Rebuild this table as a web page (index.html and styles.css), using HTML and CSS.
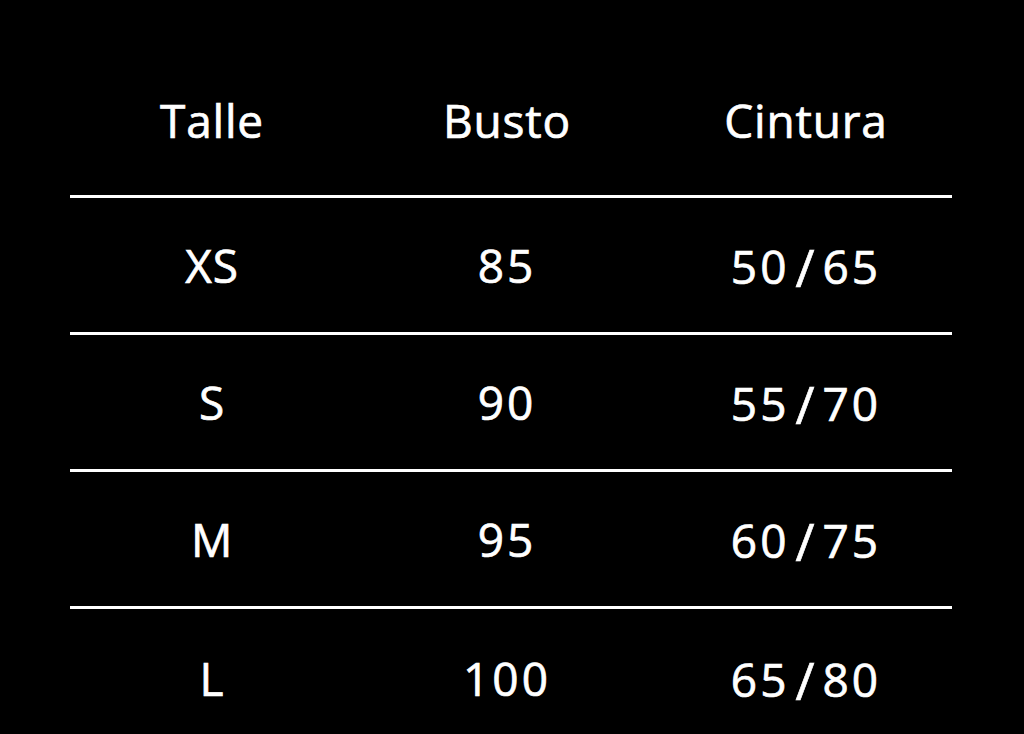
FILE: index.html
```html
<!DOCTYPE html>
<html lang="es">
<head>
<meta charset="utf-8">
<title>Tabla de talles</title>
<link rel="stylesheet" href="styles.css">
</head>
<body>
<div class="table">
  <div class="row head">
    <div class="cell c1">Talle</div>
    <div class="cell c2">Busto</div>
    <div class="cell c3">Cintura</div>
  </div>
  <div class="row">
    <div class="cell c1">XS</div>
    <div class="cell c2 num">85</div>
    <div class="cell c3 num">50<span class="sl">/</span>65</div>
  </div>
  <div class="row">
    <div class="cell c1">S</div>
    <div class="cell c2 num">90</div>
    <div class="cell c3 num">55<span class="sl">/</span>70</div>
  </div>
  <div class="row">
    <div class="cell c1">M</div>
    <div class="cell c2 num">95</div>
    <div class="cell c3 num">60<span class="sl">/</span>75</div>
  </div>
  <div class="row last">
    <div class="cell c1">L</div>
    <div class="cell c2 num">100</div>
    <div class="cell c3 num">65<span class="sl">/</span>80</div>
  </div>
</div>
</body>
</html>
```
FILE: styles.css
```css
html, body {
  margin: 0;
  padding: 0;
  background: #000;
  height: 734px;
  overflow: hidden;
}
body {
  color: #fff;
  font-family: "Open Sans", "DejaVu Sans", sans-serif;
  font-weight: 500;
  font-size: 46px;
  letter-spacing: 0.8px;
  -webkit-text-stroke: 0.7px #fff;
}
.table {
  margin-left: 70px;
  width: 882px;
}
.row {
  display: grid;
  grid-template-columns: 284px 306px 292px;
  align-items: center;
  box-sizing: border-box;
  height: 137px;
  border-bottom: 3px solid #fff;
}
.row.head {
  height: 198px;
  align-items: start;
  padding-top: 90px;
}
.row.last {
  border-bottom: none;
}
.cell {
  text-align: center;
  line-height: 60px;
}
.num {
  letter-spacing: 3px;
}
.sl {
  display: inline-block;
  margin: 0 8px 0 6px;
  font-size: 52px;
  letter-spacing: 0;
  transform: translateY(3px);
}
```
